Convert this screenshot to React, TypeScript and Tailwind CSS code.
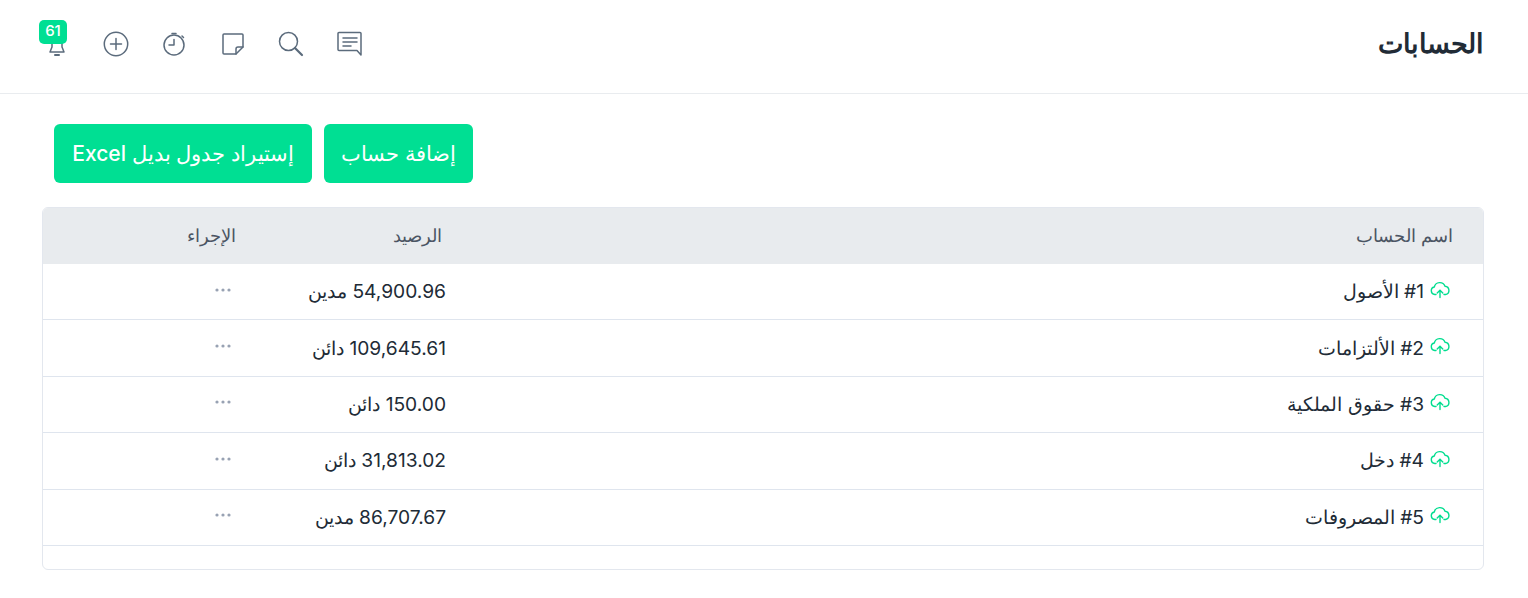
const rows = [
  { name: "#1 الأصول", balance: "54,900.96 مدين" },
  { name: "#2 الألتزامات", balance: "109,645.61 دائن" },
  { name: "#3 حقوق الملكية", balance: "150.00 دائن" },
  { name: "#4 دخل", balance: "31,813.02 دائن" },
  { name: "#5 المصروفات", balance: "86,707.67 مدين" },
];

const CloudUp = () => (
  <svg width="20" height="18" viewBox="0 0 20 18" fill="none" stroke="#00dd8f" strokeWidth="1.4" strokeLinecap="round" strokeLinejoin="round">
    <path d="M6 13.5H4.8a3.8 3.8 0 0 1-.5-7.5A5.6 5.6 0 0 1 15 5.2a4.2 4.2 0 0 1 .6 8.3H14" />
    <path d="M10 16.5V9.5" />
    <path d="M7.2 12 10 9.2l2.8 2.8" />
  </svg>
);

const Dots = () => (
  <svg width="18" height="4" viewBox="0 0 18 4" fill="#98a2b3">
    <circle cx="3" cy="2" r="1.6" />
    <circle cx="9" cy="2" r="1.6" />
    <circle cx="15" cy="2" r="1.6" />
  </svg>
);

const iconProps = {
  width: 26,
  height: 26,
  viewBox: "0 0 26 26",
  fill: "none",
  stroke: "#5b6b7c",
  strokeWidth: 1.5,
  strokeLinecap: "round" as const,
  strokeLinejoin: "round" as const,
};

export default function App() {
  return (
    <div dir="rtl" className="min-h-[598px] bg-white text-[#212b36]" style={{ fontFamily: 'Inter, "Noto Sans", sans-serif' }}>
      <header className="flex h-[94px] items-center justify-between border-b border-[#e9ecef] pb-[5px] pl-[44px] pr-[44px]">
        <h1 className="text-[27.3px] font-bold">الحسابات</h1>
        <div dir="ltr" className="-mt-px flex items-center gap-[32.6px]">
          <div className="relative">
            <svg {...iconProps}>
              <path d="M8 10v6l-2 5h14l-2-5v-6" />
              <path d="M11 24h4" strokeWidth="2" />
            </svg>
            <span className="absolute -top-[11px] -left-[5px] flex h-6 w-7 items-center justify-center rounded-[5px] bg-[#00df93] text-[15px] font-medium text-white">61</span>
          </div>
          <svg {...iconProps}>
            <circle cx="13" cy="13" r="11.7" />
            <path d="M13 7.5v11M7.5 13h11" />
          </svg>
          <svg {...iconProps}>
            <circle cx="13" cy="14" r="10" />
            <path d="M13 8.5V14H8M11 2.5h4M21 5l1.5 1.5" />
          </svg>
          <svg {...iconProps}>
            <path d="M4 3h18a1 1 0 0 1 1 1v12l-7 7H4a1 1 0 0 1-1-1V4a1 1 0 0 1 1-1z" />
            <path d="M23 16h-5a2 2 0 0 0-2 2v5" />
          </svg>
          <svg {...iconProps}>
            <circle cx="10.5" cy="10.5" r="9" />
            <path d="m17 17 7 7" strokeWidth="2.2" />
          </svg>
          <svg {...iconProps}>
            <path d="M2 1.5h21a1 1 0 0 1 1 1V24l-4-4.5H2a1 1 0 0 1-1-1v-16a1 1 0 0 1 1-1z" />
            <path d="M6 7h14M6 11h14M6 15h8" />
          </svg>
        </div>
      </header>

      <main className="pl-[42px] pr-[44px] pt-[30px]">
        <div className="mb-6 flex justify-end gap-3 pl-[12px]">
          <button className="flex h-[59px] w-[149px] items-center justify-center rounded-md bg-[#00df93] text-[21px] font-medium text-white">
            إضافة حساب
          </button>
          <button className="flex h-[59px] w-[258px] items-center justify-center rounded-md bg-[#00df93] text-[21px] font-medium text-white">
            إستيراد جدول بديل Excel
          </button>
        </div>

        <div className="h-[363px] overflow-hidden rounded-md border border-[#e3e7ee]">
          <div className="flex h-[56px] items-center bg-[#e8ebee] text-lg text-[#4b5563]">
            <div className="flex-1 pr-[30px]">اسم الحساب</div>
            <div className="w-[210px] pr-[4px]">الرصيد</div>
            <div className="w-[193px]">الإجراء</div>
          </div>
          {rows.map((row) => (
            <div key={row.name} className="flex h-[56.4px] items-center border-b border-[#dfe5ee] text-[19.2px]">
              <div className="flex flex-1 items-center gap-[6px] pr-[33px]">
                <span className="-mt-1"><CloudUp /></span>
                <span>{row.name}</span>
              </div>
              <div className="w-[210px]">{row.balance}</div>
              <div className="flex w-[193px]">
                <div className="mr-[4px] -mt-1"><Dots /></div>
              </div>
            </div>
          ))}
        </div>
      </main>
    </div>
  );
}
